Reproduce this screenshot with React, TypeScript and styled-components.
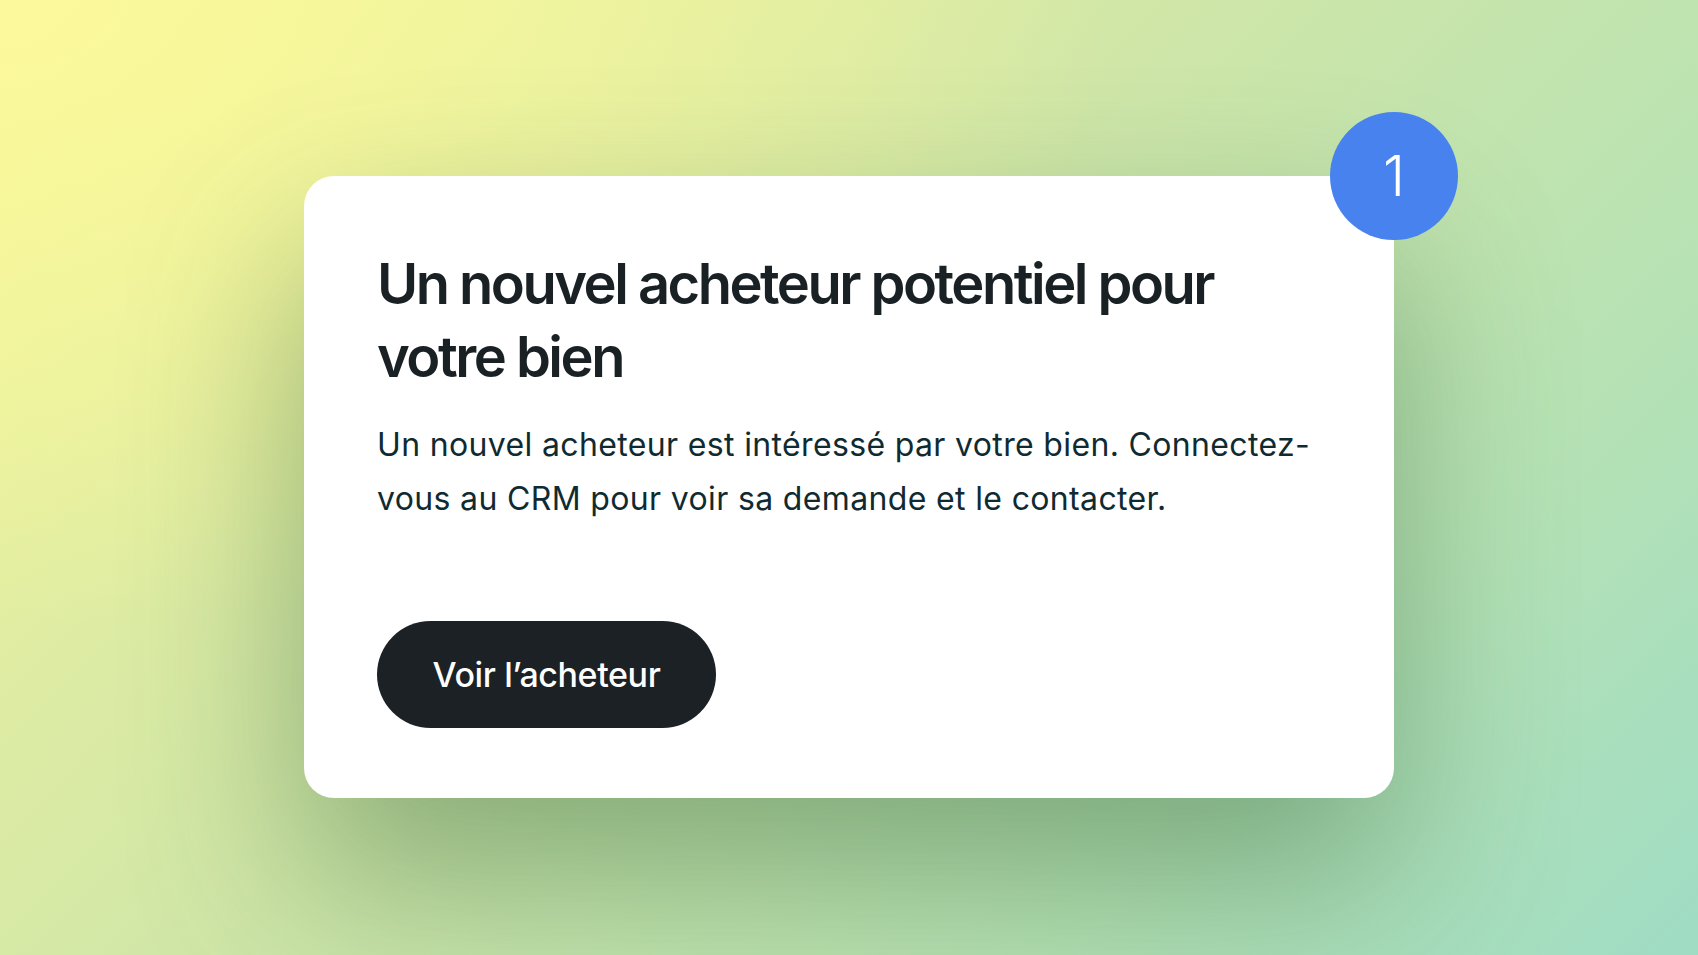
import React from 'react';
import styled, { createGlobalStyle } from 'styled-components';

const GlobalStyle = createGlobalStyle`
  html, body {
    margin: 0;
    padding: 0;
  }
  body {
    font-family: Inter, "Noto Sans", sans-serif;
    -webkit-font-smoothing: antialiased;
  }
`;

const Page = styled.main`
  box-sizing: border-box;
  width: 100%;
  height: 955px;
  overflow: hidden;
  display: flex;
  justify-content: center;
  align-items: flex-start;
  padding-top: 176px;
  background:
    radial-gradient(120% 120% at 0% 0%, #fbf99a 0%, rgba(251, 249, 154, 0) 55%),
    linear-gradient(135deg, #f4f59c 0%, #cfe6a8 45%, #b6e2b4 75%, #9fdcc4 100%);
`;

const Card = styled.section`
  position: relative;
  box-sizing: border-box;
  width: 1090px;
  height: 622px;
  padding: 72px 60px 70px 73px;
  display: flex;
  flex-direction: column;
  align-items: flex-start;
  background: #ffffff;
  border-radius: 30px;
  box-shadow: 0 80px 170px rgba(40, 90, 50, 0.42);
`;

const Badge = styled.div`
  position: absolute;
  top: -64px;
  right: -64px;
  width: 128px;
  height: 128px;
  border-radius: 50%;
  background: #4782ef;
  color: #ffffff;
  display: flex;
  align-items: center;
  justify-content: center;
  font-size: 56px;
  font-weight: 300;
`;

const Title = styled.h1`
  margin: 0;
  color: #1a2125;
  font-size: 56px;
  line-height: 1.3;
  font-weight: 600;
  letter-spacing: -2.5px;
`;

const Text = styled.p`
  margin: 24px 0 0;
  max-width: 950px;
  color: #0f2b31;
  font-size: 32px;
  line-height: 54px;
  font-weight: 400;
  letter-spacing: 0.35px;
`;

const Button = styled.button`
  margin-top: 95px;
  width: 339px;
  height: 110px;
  border: none;
  border-radius: 55px;
  background: #1b2124;
  color: #ffffff;
  font-family: inherit;
  font-size: 34px;
  font-weight: 500;
  letter-spacing: -0.4px;
  cursor: pointer;
`;

export default function App() {
  return (
    <>
      <GlobalStyle />
      <Page>
        <Card>
          <Badge>1</Badge>
          <Title>Un nouvel acheteur potentiel pour votre bien</Title>
          <Text>
            Un nouvel acheteur est intéressé par votre bien. Connectez-vous au CRM pour voir sa
            demande et le contacter.
          </Text>
          <Button>Voir l’acheteur</Button>
        </Card>
      </Page>
    </>
  );
}
